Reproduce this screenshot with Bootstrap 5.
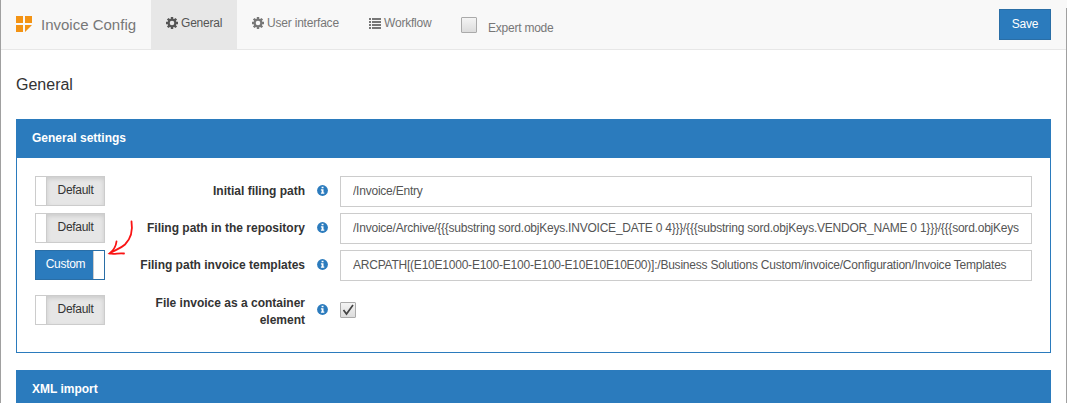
<!DOCTYPE html>
<html lang="en">
<head>
<meta charset="utf-8">
<title>Invoice Config</title>
<meta name="viewport" content="width=device-width, initial-scale=1">
<link href="https://cdn.jsdelivr.net/npm/bootstrap@5.3.0/dist/css/bootstrap.min.css" rel="stylesheet">
<script src="https://cdn.jsdelivr.net/npm/bootstrap@5.3.0/dist/js/bootstrap.bundle.min.js" defer></script>
<style>
body{font:12px/17px "Liberation Sans",Arial,sans-serif;color:#333;height:403px;overflow:hidden}
.frame{height:403px;border-left:1px solid #a0a0a0;overflow:hidden}
.frame-edge{top:8px;right:0;width:1px;height:395px;background:#a0a0a0}
.topbar{height:50px;background:#f8f8f8;border-bottom:1px solid #e7e7e7;padding:0 16px 0 15px;color:#777;flex-wrap:nowrap}
.topbar .navbar-brand{font-size:15px;line-height:20px;color:#777;padding:0;margin:0;width:135px;gap:9px}
.topbar .nav-link{height:50px;padding:0 0 3px 15px;color:#777;gap:3px;white-space:nowrap;letter-spacing:-.2px;flex:none}
.topbar .nav-link.active{background:#e7e7e7;color:#555}
.tab-general{width:86px}
.tab-interface{width:117px}
.tab-workflow{width:93px}
.cog{margin-top:-1px}
.expert{padding-left:14px;gap:11px;letter-spacing:-.23px}
.expert .box{margin-top:17px}
.expert span{margin-top:20px}
.btn-main{--bs-btn-color:#fff;--bs-btn-bg:#2b7bbd;--bs-btn-border-color:#2a6ea6;--bs-btn-hover-bg:#286090;--bs-btn-hover-color:#fff;--bs-btn-border-radius:0;font-size:12px;line-height:17px;width:52px;height:31px;padding:6px 0;letter-spacing:-.2px}
.box{appearance:none;width:16px;height:16px;border:1px solid #aaa;border-radius:1px;background:linear-gradient(#f4f4f4,#dcdcdc);margin:0;display:block;flex:none}
.page-title{font-size:16px;line-height:20px;margin:25px 0 24px}
.panel-box{border:1px solid #2b7bbd;border-radius:0;margin-bottom:17px}
.panel-box .card-header{background:#2b7bbd;color:#fff;border:0;border-radius:0;font-weight:700;height:38px;padding:10px 15px}
.panel-box .card-body{padding:18px 18px 0;height:194px;flex:none}
.setting{height:31px;margin-bottom:6px}
.setting.tall{height:34px;margin-top:12px}
.toggle{width:70px;height:30px;border:1px solid #ccc;background:#fff;flex:none;line-height:16px;letter-spacing:-.3px;margin-bottom:1px}
.tall .toggle{margin-bottom:0}
.toggle span{flex:1;text-align:center;padding-top:5px;background:#e6e6e6;border-left:1px solid #ccc;box-shadow:inset 0 2px 4px rgba(0,0,0,.12);color:#333}
.toggle i{width:10px}
.toggle.custom{border-color:#2a6ea6}
.toggle.custom span{background:#2b7bbd;color:#fff;border:0;box-shadow:none;padding-left:2px}
.toggle.custom i{border-left:1px solid #ccc;width:11px}
.setting label{width:200px;text-align:right;font-weight:700;flex:none}
.tall label{padding-top:3px}
.setting .info{margin-left:12px;margin-right:12px;margin-top:-2px;flex:none}
.setting .form-control{height:31px;border:1px solid #ccc;border-radius:0;padding:5px 12px 7px;font-size:12px;line-height:17px;color:#555;letter-spacing:-.225px}
.scribble{left:105px;top:216px}
svg{display:block;flex:none}
</style>
</head>
<body>
<svg width="0" height="0" class="position-absolute" aria-hidden="true">
<symbol id="cog" viewBox="0 0 12 12"><path fill="currentColor" fill-rule="evenodd" d="M4.800 0h2.400v1.700l1 .4 1.200-1.200 1.700 1.700-1.200 1.200.4 1H12v2.400h-1.700l-.4 1 1.200 1.200-1.700 1.700-1.200-1.200-1 .4V12H4.800v-1.700l-1-.4-1.200 1.200L.9 9.400l1.200-1.200-.4-1H0V4.800h1.700l.4-1L.9 2.600 2.600.9l1.200 1.200 1-.4zM6 3.700a2.300 2.300 0 1 0 0 4.600a2.300 2.300 0 0 0 0-4.600z"/></symbol>
<symbol id="info" viewBox="0 0 11 11"><circle cx="5.500" cy="5.500" r="5.400" fill="#2b7bbd"/><path fill="#fff" d="M4.600 1.700h1.900v1.500H4.600zM3.900 4.200h2.600v3.300h.8v1.300H3.900V7.500h.8v-2h-.8z"/></symbol>
</svg>
<div class="frame">
<nav class="navbar topbar d-flex align-items-stretch justify-content-start">
  <a class="navbar-brand d-flex align-items-center" href="#">
    <svg width="16" height="16" viewBox="0 0 16 16" fill="#f39314" style="margin-top:-1px"><path d="M0 0h7v7H0zM9 0h7v7H9zM0 9h7v7H0zM9 9h7L9 16z"/></svg>
    <span>Invoice Config</span>
  </a>
  <a class="nav-link tab-general active d-flex align-items-center" href="#"><svg class="cog" width="12" height="12"><use href="#cog"/></svg>General</a>
  <a class="nav-link tab-interface d-flex align-items-center" href="#"><svg class="cog" width="12" height="12"><use href="#cog"/></svg>User interface</a>
  <a class="nav-link tab-workflow d-flex align-items-center" href="#"><svg width="12" height="11" viewBox="0 0 12 11" fill="currentColor"><path d="M0 0h2v2H0zM3 0h9v2H3zM0 3h2v2H0zM3 3h9v2H3zM0 6h2v2H0zM3 6h9v2H3zM0 9h2v2H0zM3 9h9v2H3z"/></svg>Workflow</a>
  <div class="d-flex expert"><input type="checkbox" class="box" aria-label="Expert mode"><span>Expert mode</span></div>
  <button class="btn btn-main ms-auto align-self-center">Save</button>
</nav>
<main class="px-3" style="padding-left:15px!important">
  <h1 class="page-title fw-normal">General</h1>
  <section class="card panel-box">
    <div class="card-header">General settings</div>
    <div class="card-body">
      <div class="setting d-flex align-items-center"><div class="toggle d-flex"><i></i><span>Default</span></div><label>Initial filing path</label><svg class="info" width="11" height="11"><use href="#info"/></svg><input class="form-control" value="/Invoice/Entry"></div>
      <div class="setting d-flex align-items-center"><div class="toggle d-flex"><i></i><span>Default</span></div><label>Filing path in the repository</label><svg class="info" width="11" height="11"><use href="#info"/></svg><input class="form-control" value="/Invoice/Archive/{{{substring sord.objKeys.INVOICE_DATE 0 4}}}/{{{substring sord.objKeys.VENDOR_NAME 0 1}}}/{{{sord.objKeys"></div>
      <div class="setting d-flex align-items-center"><div class="toggle custom d-flex"><span>Custom</span><i></i></div><label>Filing path invoice templates</label><svg class="info" width="11" height="11"><use href="#info"/></svg><input class="form-control" value="ARCPATH[(E10E1000-E100-E100-E100-E10E10E10E00)]:/Business Solutions Custom/invoice/Configuration/Invoice Templates"></div>
      <div class="setting tall d-flex align-items-center"><div class="toggle d-flex"><i></i><span>Default</span></div><label>File invoice as a container<br>element</label><svg class="info" width="11" height="11"><use href="#info"/></svg><div class="box"><svg width="14" height="14" viewBox="0 0 14 14" fill="none" stroke="#444" stroke-width="1.700"><path d="M2.500 7l3 4L12 2"/></svg></div></div>
    </div>
  </section>
  <section class="card panel-box"><div class="card-header">XML import</div><div class="card-body"></div></section>
</main>
</div>
<div class="frame-edge position-absolute"></div>
<svg class="scribble position-absolute" width="32" height="42" viewBox="0 0 32 42" fill="none" stroke="#fa1414" stroke-width="1.800" stroke-linecap="round"><path d="M26.500 5.500C28 15 25.500 23 20 28.500C15 33 10 34 4.500 37.500M11.500 25.500C11 30 9 34 4.500 37.500C10 39 13 36.500 19 37.500"/></svg>
</body>
</html>
